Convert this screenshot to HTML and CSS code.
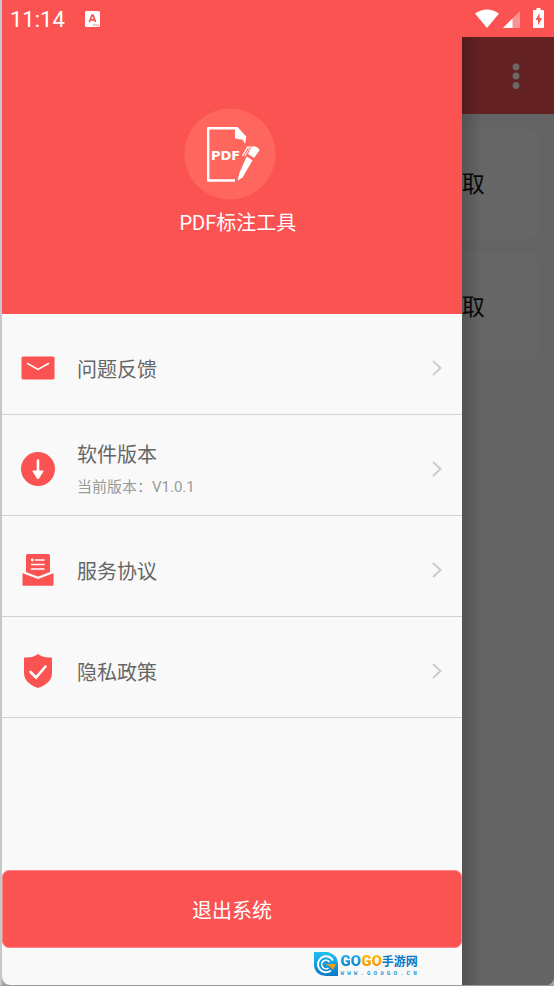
FILE: index.html
```html
<!DOCTYPE html>
<html lang="zh-CN">
<head>
<meta charset="utf-8">
<meta name="viewport" content="width=device-width, initial-scale=1">
<title>PDF标注工具</title>
<link rel="stylesheet" href="styles.css">
</head>
<body>
<div class="phone">
  <header class="status">
    <time class="clock">11:14</time>
    <svg class="app-badge" width="15" height="16" viewBox="0 0 15 16" aria-hidden="true">
      <rect width="15" height="16" rx="1.5" fill="#fff"/>
      <path d="M4.400 11 7 4.200h1L10.600 11M5.400 8.800h4.200" fill="none" stroke="#fb5352" stroke-width="1.700"/>
      <path d="M8 14h6" stroke="#fb5352" stroke-width="1.200" stroke-dasharray="1.400 .800"/>
    </svg>
    <svg class="signals" width="70" height="22" viewBox="0 0 70 22" aria-hidden="true">
      <path d="M0 5.500Q12-2.500 24 5.500L12 20Z" fill="#fff"/>
      <path d="M45 3v17H28Z" fill="#fd9292"/>
      <path d="M37.500 10.500V20H28Z" fill="#fff"/>
      <path d="M61.500 0h4v2H68q1 0 1 1v16q0 1-1 1h-9q-1 0-1-1V3q0-1 1-1h2.500Z" fill="#fff"/>
      <path d="M64.500 5 60.500 12h2.500v5.500l4-7.500H64.500Z" fill="#fb5352"/>
    </svg>
  </header>
  <div class="screen">
    <aside class="drawer">
      <div class="brand">
        <svg width="92" height="92" viewBox="0 0 92 92" role="img" aria-label="PDF">
          <circle cx="46" cy="46" r="45.500" fill="#ff665e"/>
          <path d="M51 72.500H24.200V20.300H53" fill="none" stroke="#fff" stroke-width="2.400" stroke-linejoin="round"/>
          <path d="M51 19.100h2.500l8.700 9.400-1 7.200-2.500-4-7.700-1.200Z" fill="#fff"/>
          <text class="pdf-label" x="27" y="52">PDF</text>
          <g fill="#fff">
            <path d="M67.500 38.500q3-1 6.500 1.500 2 1.500 1 3L70 50l-6-4Z"/>
            <path d="m62.700 48.500 5.800 3.800-9.800 17-5.200 3.500 1.800-7.500Z"/>
            <path d="M66.500 39.200h-3L58.500 48" fill="none" stroke="#fff" stroke-width="1.300"/>
            <path d="m66 39.200-5.200 9" fill="none" stroke="#fff" stroke-width="1"/>
          </g>
        </svg>
        <h1>PDF标注工具</h1>
      </div>
      <nav class="menu">
        <a class="row" href="#feedback">
          <svg class="icon" width="34" height="34" viewBox="0 0 34 34" aria-hidden="true">
            <rect x=".5" y="5.500" width="33" height="23" rx="1.800" fill="#fb5352"/>
            <path d="m6.500 12.500 10.500 6 10.500-6" fill="none" stroke="#fff" stroke-width="1.500" stroke-linecap="round"/>
          </svg>
          <span class="label">问题反馈</span>
          <svg class="chevron" width="10" height="16" viewBox="0 0 10 16" aria-hidden="true"><path d="m1 1 7.500 7L1 15"/></svg>
        </a>
        <a class="row" href="#version">
          <svg class="icon" width="34" height="34" viewBox="0 0 34 34" aria-hidden="true">
            <circle cx="17" cy="17" r="17" fill="#fb5352"/>
            <path d="M17 8.500V20" fill="none" stroke="#fff" stroke-width="2.600" stroke-linecap="round"/>
            <path d="M11.800 19h10.400L17.600 26.500q-.6.700-1.200 0Z" fill="#fff" stroke="#fff" stroke-linejoin="round"/>
          </svg>
          <span class="label">软件版本<small>当前版本：V1.0.1</small></span>
          <svg class="chevron" width="10" height="16" viewBox="0 0 10 16" aria-hidden="true"><path d="m1 1 7.500 7L1 15"/></svg>
        </a>
        <a class="row" href="#terms">
          <svg class="icon" width="34" height="34" viewBox="0 0 34 34" aria-hidden="true">
            <path d="M6.500 1h21q1.500 0 1.500 1.500V20l-12 4-12-4V2.500Q5 1 6.500 1Z" fill="#fb5352"/>
            <path d="M1.500 20.200 17 26l15.500-5.800V32q0 .800-.8.800H2.300q-.8 0-.8-.8Z" fill="#fb5352"/>
            <path d="M1.500 18.500 17 24.500l15.500-6" fill="none" stroke="#f9f9f9" stroke-width="1.500"/>
            <path d="M14.500 7H23M10.500 11.500H23M10.500 16H23" stroke="#fff" stroke-width="1.500" stroke-linecap="round"/>
            <circle cx="11.300" cy="7" r="1.400" fill="#fff"/>
          </svg>
          <span class="label">服务协议</span>
          <svg class="chevron" width="10" height="16" viewBox="0 0 10 16" aria-hidden="true"><path d="m1 1 7.500 7L1 15"/></svg>
        </a>
        <a class="row" href="#privacy">
          <svg class="icon" width="34" height="34" viewBox="0 0 34 34" aria-hidden="true">
            <path d="M17 0q5 4 13.200 3.500.8 0 .8.800V19q0 10-14 15Q3 29 3 19V4.300q0-.8.8-.8Q12 4 17 0Z" fill="#fb5352"/>
            <path d="m9.500 18 5.500 5.500 9.500-11" fill="none" stroke="#fff" stroke-width="2.600" stroke-linecap="round"/>
          </svg>
          <span class="label">隐私政策</span>
          <svg class="chevron" width="10" height="16" viewBox="0 0 10 16" aria-hidden="true"><path d="m1 1 7.500 7L1 15"/></svg>
        </a>
      </nav>
      <button class="exit" type="button">退出系统</button>
      <div class="sponsor">
        <svg width="24" height="25" viewBox="0 0 24 25" aria-hidden="true">
          <defs><linearGradient id="blue" x2="0" y2="1"><stop stop-color="#20c0ef"/><stop offset="1" stop-color="#0878c8"/></linearGradient></defs>
          <path d="M0 0h14q10 3 10 12v12H12Q0 23 0 12Z" fill="url(#blue)"/>
          <path d="M19 8.500a8 8 0 1 0-2 10" fill="none" stroke="#fff" stroke-width="2"/>
          <path d="M15.500 10a4.300 4.300 0 1 0-1 6" fill="none" stroke="#fff" stroke-width="1.600"/>
          <path d="M11 12h11l-3 6-3-3.500Z" fill="#f69a13"/>
        </svg>
        <div class="sponsor-text">
          <div class="sponsor-name"><b class="cool">GO</b><b class="warm">GO</b><strong>手游网</strong></div>
          <div class="sponsor-url">WWW.GO9GO.CN</div>
        </div>
      </div>
    </aside>
    <main class="behind">
      <div class="appbar">
        <button class="more" type="button" aria-label="更多"><svg width="8" height="26" viewBox="0 0 8 26"><g fill="#6b6868"><circle cx="4" cy="4" r="3.400"/><circle cx="4" cy="13" r="3.400"/><circle cx="4" cy="22.500" r="3.400"/></g></svg></button>
      </div>
      <div class="cards">
        <div class="card">取</div>
        <div class="card">取</div>
      </div>
    </main>
  </div>
</div>
</body>
</html>
```
FILE: styles.css
```css
* { box-sizing: border-box; }

body {
  margin: 0;
  background: #a4a4a4;
  font-family: Roboto, "Noto Sans CJK SC", sans-serif;
}

.phone {
  display: flex;
  flex-direction: column;
  min-height: 100vh;
  border-left: 2px solid #c4c8ca;
  border-bottom: 1px solid #999;
}

.status {
  display: flex;
  align-items: center;
  height: 37px;
  padding: 0 9px 0 8px;
  background: #fb5352;
  color: #fff;
}

.clock {
  padding-top: 2px;
  font-size: 22px;
  line-height: 36px;
}

.app-badge { margin-left: 20px; }
.signals { margin-left: auto; }

.screen {
  display: flex;
  flex: 1;
  background: #646464;
  border-radius: 0 0 8px 8px;
}

.drawer {
  display: flex;
  flex-direction: column;
  width: 83.3%;
  background: #f9f9f9;
  border-bottom-left-radius: 8px;
}

.brand {
  display: flex;
  flex-direction: column;
  align-items: center;
  gap: 7px;
  height: 277px;
  padding: 71px 0 0 12px;
  background: #fb5352;
  color: #fff;
}

.brand svg { margin-right: 16px; }

.brand h1 {
  margin: 0;
  font-size: 20px;
  font-weight: 400;
  line-height: 32px;
}

.pdf-label {
  fill: #fff;
  font: bold 13px "DejaVu Sans", sans-serif;
}

.row {
  display: flex;
  align-items: center;
  height: 101px;
  padding: 8px 20px 0 19px;
  border-bottom: 1px solid #d2d2d2;
  color: #666;
  text-decoration: none;
}

.label {
  flex: 1;
  margin-left: 22px;
  padding-top: 4px;
  font-size: 20px;
  line-height: 32px;
}

.label small {
  display: block;
  color: #999;
  font-size: 15px;
}

.chevron {
  fill: none;
  stroke: #ccc;
  stroke-width: 2;
}

.exit {
  height: 78px;
  margin-top: auto;
  border: 1px solid #fb8584;
  border-radius: 7px;
  background: #fb5352;
  color: #fff;
  font: 20px Roboto, "Noto Sans CJK SC", sans-serif;
}

.sponsor {
  display: flex;
  align-items: center;
  align-self: flex-end;
  gap: 3px;
  height: 37px;
  padding: 0 42px 4px 0;
}

.sponsor-name {
  display: flex;
  align-items: center;
  height: 18px;
  font: 900 15px/18px Roboto, sans-serif;
}

.cool,
.warm {
  background: linear-gradient(#20b9ee, #0879c9);
  background-clip: text;
  color: transparent;
}

.warm { background-image: linear-gradient(#ffc400, #f58a0b); }

.sponsor-name strong {
  color: #0a78c4;
  font: bold 12px/18px "Noto Sans CJK SC", sans-serif;
}

.sponsor-url {
  color: #2c9bd8;
  font: bold 6px/7px "Liberation Mono", monospace;
  letter-spacing: 3px;
}

.behind {
  flex: 1;
  background: linear-gradient(90deg, #535353, #646464 20px);
  border-bottom-right-radius: 8px;
}

.appbar {
  display: flex;
  align-items: center;
  justify-content: flex-end;
  height: 77px;
  padding-right: 34px;
  background: linear-gradient(90deg, #551c1d, #632122 20px);
}

.more {
  display: flex;
  padding: 0;
  border: 0;
  background: none;
}

.cards {
  display: grid;
  gap: 15px;
  padding: 16px 16px 0 0;
}

.card {
  height: 108px;
  border-radius: 0 8px 8px 0;
  background: linear-gradient(90deg, #555, #666 20px);
  color: #080808;
  font-size: 23px;
  line-height: 110px;
}
```
